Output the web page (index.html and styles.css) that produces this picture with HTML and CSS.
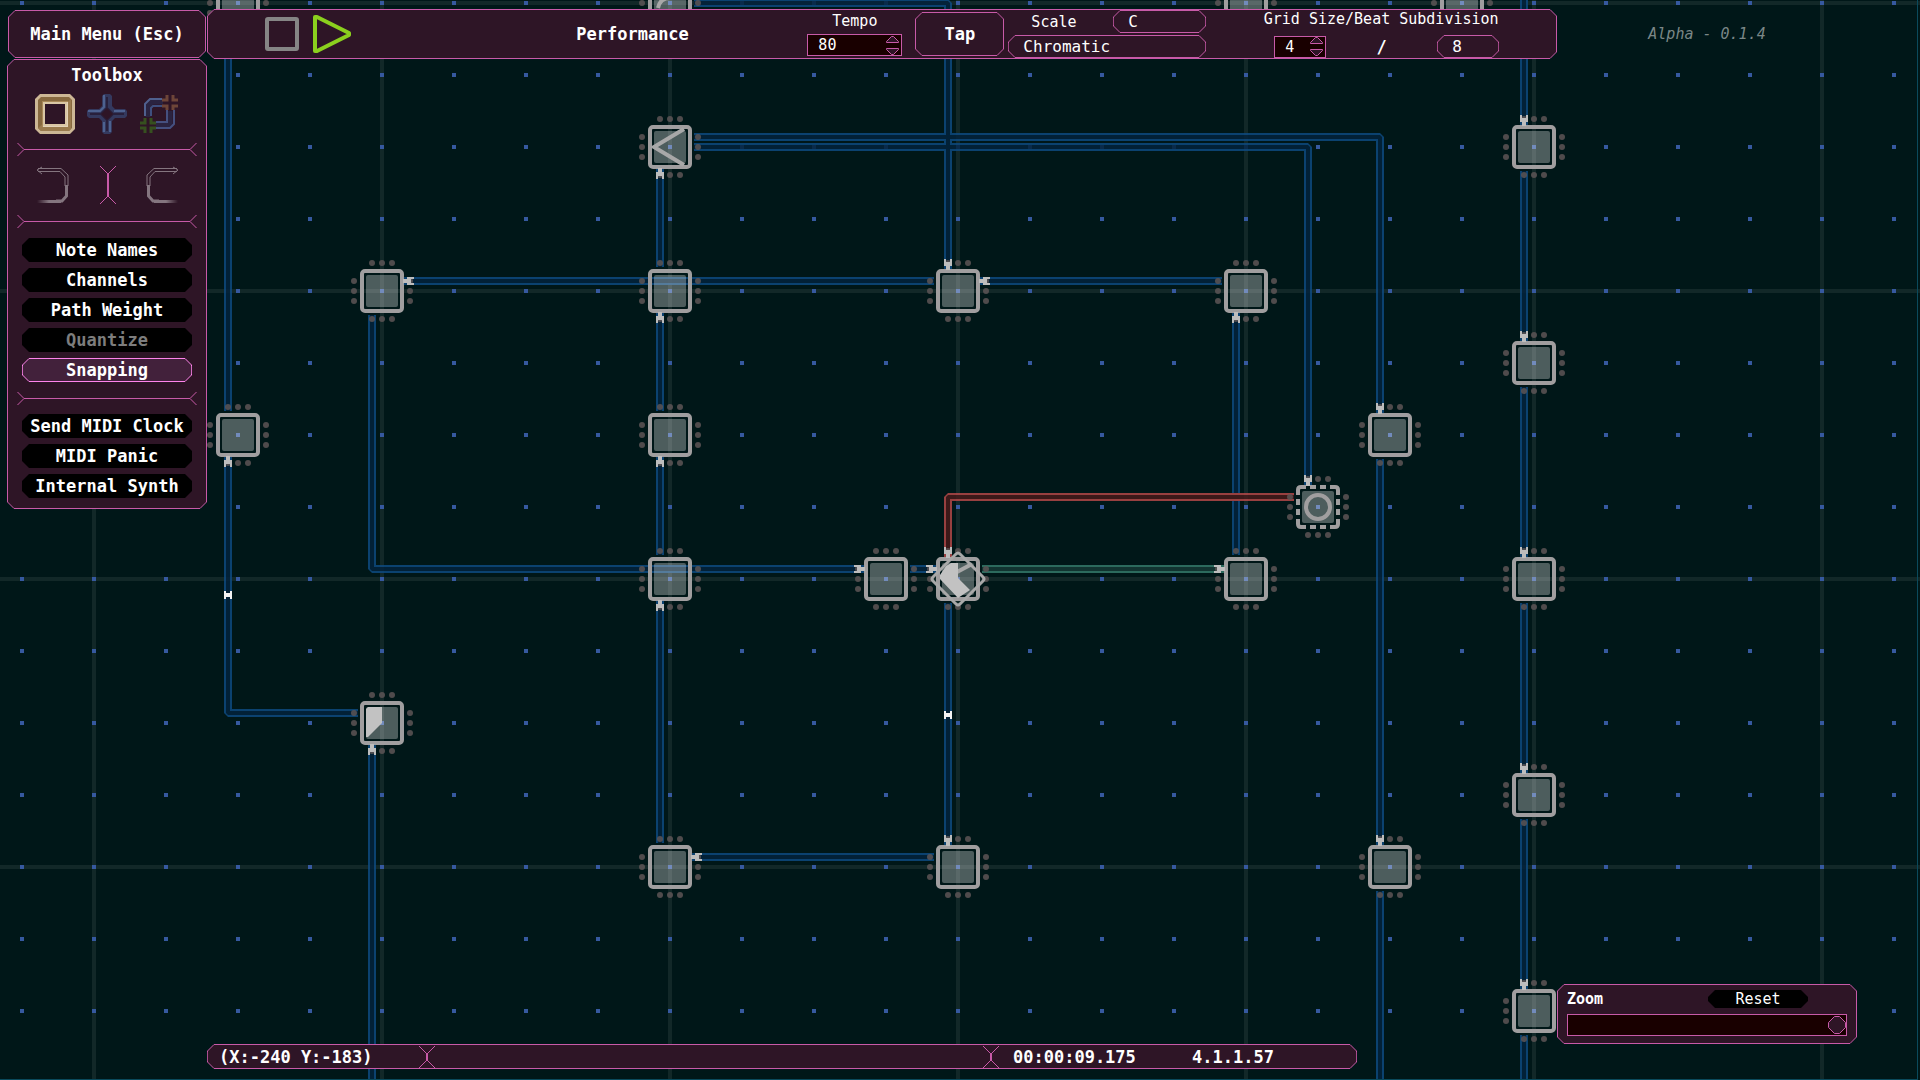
FILE: index.html
```
<!DOCTYPE html>
<html lang="en">
<head>
  <meta charset="UTF-8" />
  <meta name="viewport" content="width=device-width, initial-scale=1.0"/>
  <title>Performance</title>
  <link rel="stylesheet" href="styles.css">
</head>
<body>
  <!-- node canvas -->
  <svg class="board" aria-hidden="true">
    <defs>
      <pattern id="lines" x="92" y="1" width="288" height="288" patternUnits="userSpaceOnUse">
        <path class="grid-line" d="M0 0H288V4H4V288H0Z"/>
      </pattern>
      <pattern id="dots" x="20" y="1" width="72" height="72" patternUnits="userSpaceOnUse">
        <rect class="grid-dot" width="4" height="4"/>
      </pattern>
      <marker id="arrow" markerUnits="userSpaceOnUse" markerWidth="12" markerHeight="8" viewBox="-11 -4 12 8" refX="0" refY="0" orient="auto">
        <path class="arrow" d="M-10 -4H-3V-2H1V2H-3V4H-10V2H-7V-2H-10Z"/>
      </marker>
      <g id="pins">
        <circle cx="-28" cy="-10" r="3"/><circle cx="-28" cy="0" r="3"/><circle cx="-28" cy="10" r="3"/>
        <circle cx="28" cy="-10" r="3"/><circle cx="28" cy="0" r="3"/><circle cx="28" cy="10" r="3"/>
        <circle cx="-10" cy="-28" r="3"/><circle cx="0" cy="-28" r="3"/><circle cx="10" cy="-28" r="3"/>
        <circle cx="-10" cy="28" r="3"/><circle cx="0" cy="28" r="3"/><circle cx="10" cy="28" r="3"/>
      </g>
      <g id="core">
        <use href="#pins" class="pins"/>
        <rect class="core" x="-16" y="-16" width="32" height="32" rx="2"/>
      </g>
      <g id="node">
        <use href="#core"/>
        <rect class="frame" x="-20" y="-20" width="40" height="40" rx="3"/>
      </g>

      <path id="p1" d="M228 411V10"/>
      <path id="p2" d="M358 713H228V457"/>
      <path id="p3" d="M660 267V169"/>
      <path id="p4" d="M694 137H1380V413"/>
      <path id="p5" d="M694 147H1308V485"/>
      <path id="p6" d="M934 281H404"/>
      <path id="p7" d="M1222 281H980"/>
      <path id="p8" d="M372 315V569H864"/>
      <path id="p9" d="M694 3H948V269"/>
      <path id="p10" d="M660 411V313"/>
      <path id="p11" d="M660 555V457"/>
      <path id="p12" d="M660 843V601"/>
      <path id="p13" d="M910 569H936"/>
      <path id="p14" d="M1236 555V313"/>
      <path id="p15" d="M948 603V845"/>
      <path id="p16" d="M934 857H692"/>
      <path id="p17" d="M372 1080V745"/>
      <path id="p18" d="M1380 459V845"/>
      <path id="p19" d="M1380 891V1100"/>
      <path id="p20" d="M1524 -20V125"/>
      <path id="p21" d="M1524 171V341"/>
      <path id="p22" d="M1524 387V557"/>
      <path id="p23" d="M1524 603V773"/>
      <path id="p24" d="M1524 819V989"/>
      <path id="p25" d="M1524 1035V1100"/>
      <path id="red-path" d="M1294 497H948V557"/>
      <path id="green-path" d="M982 569H1224"/>
    </defs>

    <rect width="100%" height="100%" fill="url(#lines)"/>
    <rect width="100%" height="100%" fill="url(#dots)"/>

    <g class="wires">
      <g class="wire">
        <use href="#p1"/><use href="#p2"/><use href="#p3"/><use href="#p10"/><use href="#p11"/>
        <use href="#p12"/><use href="#p13"/><use href="#p14"/><use href="#p15"/><use href="#p16"/>
        <use href="#p17"/><use href="#p18"/><use href="#p19"/><use href="#p20"/><use href="#p21"/>
        <use href="#p22"/><use href="#p23"/><use href="#p24"/><use href="#p25"/><use href="#p9"/>
        <use href="#p6"/><use href="#p7"/><use href="#p8"/><use href="#p4"/><use href="#p5"/>
      </g>
      <g class="wire-core">
        <use href="#p1"/><use href="#p2"/><use href="#p3"/><use href="#p10"/><use href="#p11"/>
        <use href="#p12"/><use href="#p13"/><use href="#p14"/><use href="#p15"/><use href="#p16"/>
        <use href="#p17"/><use href="#p18"/><use href="#p19"/><use href="#p20"/><use href="#p21"/>
        <use href="#p22"/><use href="#p23"/><use href="#p24"/><use href="#p25"/><use href="#p9"/>
        <use href="#p6"/><use href="#p7"/><use href="#p8"/><use href="#p4"/><use href="#p5"/>
      </g>
      <use href="#red-path" class="wire red"/><use href="#red-path" class="wire-core red"/>
      <use href="#green-path" class="wire green"/><use href="#green-path" class="wire-core green"/>
    </g>

    <!-- nodes -->
    <g>
      <use href="#node" x="238" y="3"/><use href="#node" x="670" y="3"/>
      <use href="#node" x="1246" y="3"/><use href="#node" x="1462" y="3"/>
      <use href="#node" x="670" y="147"/>
      <use href="#node" x="382" y="291"/><use href="#node" x="670" y="291"/>
      <use href="#node" x="958" y="291"/><use href="#node" x="1246" y="291"/>
      <use href="#node" x="238" y="435"/><use href="#node" x="670" y="435"/><use href="#node" x="1390" y="435"/>
      <use href="#node" x="670" y="579"/><use href="#node" x="886" y="579"/><use href="#node" x="1246" y="579"/>
      <use href="#node" x="382" y="723"/>
      <use href="#node" x="670" y="867"/><use href="#node" x="958" y="867"/><use href="#node" x="1390" y="867"/>
      <use href="#node" x="1534" y="147"/><use href="#node" x="1534" y="363"/><use href="#node" x="1534" y="579"/>
      <use href="#node" x="1534" y="795"/><use href="#node" x="1534" y="1011"/>
    </g>
    <path class="mark" d="M684 129L654 147L684 165"/>
    <path class="mark" d="M658 8Q660 -2 670 -2"/>
    <path class="fill" d="M366 709L368 707H382V723L368 737H366Z"/>
    <g>
      <use href="#core" x="1318" y="507"/>
      <path class="frame" d="M1298 495V490Q1298 487 1301 487H1306M1310 487H1316M1320 487H1326M1330 487H1335Q1338 487 1338 490V495M1338 499V505M1338 509V515M1338 519V524Q1338 527 1335 527H1330M1326 527H1320M1316 527H1310M1306 527H1301Q1298 527 1298 524V519M1298 515V509M1298 505V499"/>
      <circle class="frame" cx="1318" cy="507" r="12"/>
    </g>
    <g>
      <use href="#node" x="958" y="579"/>
      <path class="mark" d="M957 572L972 564"/>
      <path class="fill" d="M946 566L951 563H958V578L970 590L958 598L940 579V575Z"/>
      <path class="diamond" d="M956 554Q958 552 960 554L983 577Q985 579 983 581L960 604Q958 606 956 604L933 581Q931 579 933 577Z"/>
    </g>

    <g class="heads">
      <use href="#p2"/><use href="#p3"/><use href="#p4"/><use href="#p5"/><use href="#p6"/>
      <use href="#p7"/><use href="#p8"/><use href="#p9"/><use href="#p10"/><use href="#p11"/>
      <use href="#p12"/><use href="#p13"/><use href="#p14"/><use href="#p15"/><use href="#p16"/>
      <use href="#p17"/><use href="#p18"/><use href="#p20"/><use href="#p21"/><use href="#p22"/>
      <use href="#p23"/><use href="#p24"/><use href="#red-path"/><use href="#green-path"/>
    </g>
    <!-- travelling signals -->
    <path class="signal" d="M224 591h2v2h4v-2h2v8h-2v-2h-4v2h-2zM944 711h2v2h4v-2h2v8h-2v-2h-4v2h-2z"/>
  </svg>
  <div class="board-edge"></div>

  <div class="hud">
    <button type="button" class="main-menu">Main Menu (Esc)</button>

    <header class="toolbar panel">
      <div class="transport">
        <button type="button" class="icon-btn" aria-label="Stop">
          <svg width="34" height="34"><rect x="2" y="2" width="30" height="30" rx="1" fill="none" stroke="#858585" stroke-width="4"/></svg>
        </button>
        <button type="button" class="icon-btn" aria-label="Play">
          <svg width="38" height="38"><path d="M2 2V36H4L36 20V18L4 2Z" fill="none" stroke="#8bd01e" stroke-width="4" stroke-linejoin="round"/></svg>
        </button>
      </div>
      <h1>Performance</h1>
      <div class="field tempo">
        <label for="tempo">Tempo</label>
        <div class="spin">
          <input type="text" id="tempo" value="80" inputmode="numeric">
          <div class="steps">
            <button type="button" aria-label="Tempo up"><svg width="13" height="8"><path d="M.5 6.500V5.500L5.500 .5H7.500L12.500 5.500V6.500Z"/></svg></button>
            <button type="button" aria-label="Tempo down"><svg width="13" height="8"><path d="M.5 1.500V2.500L5.500 7.500H7.500L12.500 2.500V1.500Z"/></svg></button>
          </div>
        </div>
      </div>
      <button type="button" class="tap">Tap</button>
      <div class="scale">
        <div class="scale-row">
          <label for="root">Scale</label>
          <select id="root"><option>C</option><option>D</option><option>E</option></select>
        </div>
        <select id="scale" aria-label="Scale type"><option>Chromatic</option><option>Major</option><option>Minor</option></select>
      </div>
      <div class="field">
        <label for="grid">Grid Size/Beat Subdivision</label>
        <div class="grid-row">
          <div class="spin small">
            <input type="text" id="grid" value="4" inputmode="numeric">
            <div class="steps">
              <button type="button" aria-label="Grid up"><svg width="13" height="8"><path d="M.5 6.500V5.500L5.500 .5H7.500L12.500 5.500V6.500Z"/></svg></button>
              <button type="button" aria-label="Grid down"><svg width="13" height="8"><path d="M.5 1.500V2.500L5.500 7.500H7.500L12.500 2.500V1.500Z"/></svg></button>
            </div>
          </div>
          <span class="slash">/</span>
          <select id="beat" aria-label="Beat subdivision"><option>8</option><option>4</option><option>16</option></select>
        </div>
      </div>
    </header>

    <p class="version">Alpha - 0.1.4</p>

    <aside class="toolbox panel">
      <h2>Toolbox</h2>
      <div class="tools">
        <button type="button" class="icon-btn" aria-label="Node tool">
          <svg width="40" height="40">
            <path d="M5 0H35L40 5V35L35 40H5L0 35V5Z" fill="#cdb795"/>
            <path d="M6 3H34L37 6V34L34 37H6L3 34V6Z" fill="#87693f"/>
            <path d="M36 5V35L34 37H6L3 34Z" fill="#9a7b4e"/>
            <path d="M7 7H33V33H7Z" fill="#a98958"/>
            <path d="M31 8H33V33H8V31H31Z" fill="#e2d2b8"/>
            <path d="M9 9H31V31H9Z" fill="#2e1526" stroke="#d9c6a5" stroke-width="2"/>
          </svg>
        </button>
        <button type="button" class="icon-btn" aria-label="Path tool">
          <svg width="40" height="40">
            <path d="M17 0H23L25 2V12L28 15H38L40 17V22L38 24H28L25 27V38L23 40H17L15 38V27L12 24H2L0 22V17L2 15H12L15 12V2Z" fill="#34395e"/>
            <path d="M17 1V13L13 17H1M23 27V38M27 17H38M17 28V38" fill="none" stroke="#4d6290" stroke-width="2"/>
            <path d="M20 3V14L14 20H3M37 20H26L20 26V37M20 14L26 20M14 20L20 26" fill="none" stroke="#28203c" stroke-width="2"/>
            <path d="M20 14L26 20L20 26L14 20Z" fill="#2e1526"/>
          </svg>
        </button>
        <button type="button" class="icon-btn" aria-label="Connect tool">
          <svg width="40" height="40" fill="none">
            <path d="M9 23V12L13 8H24M31 17V31H17" stroke="#2a2340" stroke-width="5"/>
            <path d="M6 22V10L11 5H23" stroke="#4f608e" stroke-width="2"/>
            <path d="M12 22V14L14 12H25" stroke="#3f4f7e" stroke-width="2"/>
            <path d="M28 16V28H17M35 16V30L31 34H17" stroke="#45507f" stroke-width="2"/>
            <path d="M23 6H28V1M34 1V6H39M23 12H28V16M34 16V12H39" stroke="#6d4538" stroke-width="3"/>
            <path d="M1 29H6V24M12 24V29H17M1 34H6V39M12 39V34H17" stroke="#36501f" stroke-width="3"/>
          </svg>
        </button>
      </div>
      <hr>
      <div class="tools history">
        <button type="button" class="icon-btn" aria-label="Undo">
          <svg width="33" height="38" fill="none">
            <defs><linearGradient id="fade"><stop offset="0" stop-color="#84757f" stop-opacity="0"/><stop offset="0.500" stop-color="#84757f"/></linearGradient></defs>
            <path id="undo-line" d="M6 1L1 4L6 8M2 2.500H25L32 9V20M2 5.500H24L29 11V20" stroke="#84757f"/>
            <path d="M30.500 19V30L26 35H20" stroke="#84757f" stroke-width="3"/>
            <rect x="1" y="34" width="24" height="3" fill="url(#fade)"/>
          </svg>
        </button>
        <svg class="fork" width="16" height="38"><path d="M0 0L8 8L16 0M0 38L8 30L16 38"/><path class="stem" d="M8 7V31"/></svg>
        <button type="button" class="icon-btn flip" aria-label="Redo">
          <svg width="33" height="38" fill="none">
            <use href="#undo-line"/>
            <path d="M30.500 19V30L26 35H20" stroke="#84757f" stroke-width="3"/>
            <rect x="1" y="34" width="24" height="3" fill="url(#fade)"/>
          </svg>
        </button>
      </div>
      <hr>
      <div class="options">
        <button type="button">Note Names</button>
        <button type="button">Channels</button>
        <button type="button">Path Weight</button>
        <button type="button" disabled>Quantize</button>
        <button type="button" class="active">Snapping</button>
      </div>
      <hr>
      <div class="options">
        <button type="button">Send MIDI Clock</button>
        <button type="button">MIDI Panic</button>
        <button type="button">Internal Synth</button>
      </div>
    </aside>

    <footer class="status panel">
      <span class="coords">(X:-240 Y:-183)</span>
      <svg class="fork" width="16" height="22"><path d="M0 0L8 8L16 0M0 22L8 14L16 22"/><path class="stem" d="M8 7V15"/></svg>
      <span class="message"></span>
      <svg class="fork" width="16" height="22"><path d="M0 0L8 8L16 0M0 22L8 14L16 22"/><path class="stem" d="M8 7V15"/></svg>
      <span class="clock">00:00:09.175</span>
      <span class="beats">4.1.1.57</span>
    </footer>

    <section class="zoom panel">
      <div class="zoom-row">
        <label for="zoom">Zoom</label>
        <button type="button" class="reset">Reset</button>
      </div>
      <input type="range" id="zoom" min="0" max="100" value="100">
    </section>
  </div>
</body>
</html>
```
FILE: styles.css
```
* { box-sizing: border-box; }

:root {
  --panel: #2e1526;
  --pink: #c85aa8;
  --field: #190000;
  --frame: #a09e9f;
}

body {
  margin: 0;
  height: 100vh;
  overflow: hidden;
  background: #001718;
  color: white;
  font-family: 'DejaVu Sans Mono', monospace;
  font-size: 17px;
  font-weight: bold;
}

h1, h2, p { margin: 0; font-size: 17px; }

button, input, select {
  font: inherit;
  color: inherit;
  margin: 0;
  padding: 0;
  background: none;
  border: none;
}

button { cursor: pointer; }
button:disabled { color: #7d7d7d; cursor: default; }

/* board */
.board, .board-edge {
  position: absolute;
  top: 0;
  left: 0;
  width: 100%;
  height: 100%;
}

.board-edge {
  width: calc(100% - 2px);
  border-right: 1px solid #0a4a5c;
  border-bottom: 1px solid #0a4a5c;
}

.grid-line { fill: #122828; }
.grid-dot { fill: #36599f; }
.wires { opacity: 0.85; }
.wire, .wire-core { fill: none; stroke-linejoin: bevel; }
.wire { stroke: #0e4a80; stroke-width: 8px; }
.wire-core { stroke: #03233d; stroke-width: 4px; }
.wire.red { stroke: #b34848; }
.wire-core.red { stroke: #471a1a; }
.wire.green { stroke: #34796a; }
.wire-core.green { stroke: #163a36; }
.arrow { fill: #bdbdbd; }
.heads { fill: none; marker-end: url(#arrow); }
.pins { fill: #5d5556; opacity: 0.85; }
.core { fill: #ffffff; opacity: 0.3; }
.frame { fill: none; stroke: var(--frame); stroke-width: 4px; }
.mark { fill: none; stroke: #a8a8a8; stroke-width: 4px; }
.diamond { fill: none; stroke: #a8a8a8; stroke-width: 3px; }
.fill { fill: #c2c2c2; }
.signal { fill: #f2f2f2; }

/* overlay */
.hud {
  position: relative;
  display: grid;
  grid-template-columns: 200px 1fr 300px;
  grid-template-rows: 50px auto 1fr auto;
  height: 100vh;
  padding: 9px 63px 11px 7px;
}

/* cut corners, 7px */
.panel, .main-menu, .tap, select {
  border: 1px solid transparent;
  border-image: url("data:image/svg+xml,%3Csvg xmlns='http://www.w3.org/2000/svg' width='30' height='30'%3E%3Cpath d='M7 .5H23L29.5 7V23L23 29.5H7L.5 23V7Z' fill='%232e1526' stroke='%23c85aa8'/%3E%3C/svg%3E") 8 fill / 8px;
}

.main-menu {
  height: 48px;
  margin: 1px 1px 0 1px;
}

.toolbar {
  display: grid;
  grid-template-columns: 5fr 7fr 95px 102px 202px 7fr;
  align-items: center;
  font-size: 15px;
  font-weight: normal;
}

.toolbar h1 { text-align: center; }

.transport {
  display: flex;
  align-items: center;
  gap: 14px;
  padding-left: 57px;
}

.icon-btn svg, .steps svg { display: block; }

.field {
  display: flex;
  flex-direction: column;
  align-items: center;
  align-self: stretch;
  justify-content: space-between;
  line-height: 18px;
}

.tempo { padding: 2px 0; }

.spin {
  display: flex;
  align-items: center;
  width: 100%;
  height: 22px;
  padding: 0 2px 0 10px;
  background: var(--field);
  border: 1px solid var(--pink);
}

.spin input { flex: 1; min-width: 0; }

.steps {
  display: flex;
  flex-direction: column;
  gap: 3px;
}

.steps path { fill: var(--panel); stroke: var(--pink); }

.tap {
  height: 44px;
  margin-left: 13px;
  font-size: 17px;
  font-weight: bold;
}

.scale {
  display: flex;
  flex-direction: column;
  gap: 2px;
  margin-left: 4px;
}

.scale-row {
  display: flex;
  justify-content: space-between;
  align-items: center;
  padding-left: 23px;
}

select {
  appearance: none;
  height: 23px;
  padding-left: 14px;
  font-size: 16px;
}

#root { width: 93px; }
#beat { width: 62px; }

option { background: var(--panel); }

.grid-row {
  display: flex;
  justify-content: space-between;
  align-items: center;
  width: 236px;
  padding-left: 11px;
}

.spin.small { width: 52px; }

.slash { font-size: 17px; font-weight: bold; }

.version {
  align-self: center;
  text-align: center;
  color: #7b8787;
  font-size: 15px;
  font-weight: normal;
  font-style: italic;
}

/* toolbox */
.toolbox {
  grid-column: 1;
  padding: 5px 9px 10px;
}

.toolbox h2 {
  line-height: 20px;
  text-align: center;
}

.tools {
  display: flex;
  justify-content: space-between;
  padding: 9px 18px;
}

.history { padding: 10px 18px 11px 19px; }
.flip { transform: scaleX(-1); }

.fork { display: block; fill: none; stroke: var(--pink); }
.fork .stem { stroke-width: 2px; }

hr {
  height: 13px;
  margin: 0;
  border: 0 solid transparent;
  border-image: url("data:image/svg+xml,%3Csvg xmlns='http://www.w3.org/2000/svg' width='30' height='13'%3E%3Cpath d='M.5 0L7 6.5L.5 13M29.5 0L23 6.5L29.5 13M7 6.5H23' fill='none' stroke='%23c85aa8'/%3E%3C/svg%3E") 0 8 fill / 0 8px;
  border-width: 0 1px;
}

.options {
  display: flex;
  flex-direction: column;
  gap: 6px;
  padding: 10px 5px;
}

.options:last-child { padding: 9px 5px 0; }

.options button, .reset {
  height: 24px;
  background: #000000;
  clip-path: polygon(7px 0, calc(100% - 7px) 0, 100% 7px, 100% calc(100% - 7px), calc(100% - 7px) 100%, 7px 100%, 0 calc(100% - 7px), 0 7px);
}

.options .active {
  background: none;
  clip-path: none;
  border: 1px solid transparent;
  border-image: url("data:image/svg+xml,%3Csvg xmlns='http://www.w3.org/2000/svg' width='30' height='30'%3E%3Cpath d='M7 .5H23L29.5 7V23L23 29.5H7L.5 23V7Z' fill='%2342213b' stroke='%23ff84ec'/%3E%3C/svg%3E") 8 fill / 8px;
}

/* bottom */
.status {
  grid-column: 2;
  grid-row: 4;
  align-self: end;
  display: flex;
  align-items: center;
  height: 25px;
  margin-right: 200px;
  padding-left: 11px;
}

.coords { width: 200px; }
.message { flex: 1; }
.clock { width: 179px; padding-left: 14px; }
.beats { width: 178px; padding-left: 14px; }

.zoom {
  grid-column: 3;
  grid-row: 4;
  margin-bottom: 25px;
  padding: 5px 9px 7px;
  font-size: 15px;
}

.zoom-row {
  display: flex;
  justify-content: space-between;
  line-height: 18px;
  padding-right: 39px;
  margin-bottom: 6px;
}

.reset {
  width: 100px;
  height: 18px;
  font-weight: normal;
}

input[type="range"] {
  appearance: none;
  display: block;
  width: 100%;
  height: 22px;
  background: var(--field);
  border: 1px solid var(--pink);
}

input[type="range"]::-webkit-slider-thumb {
  appearance: none;
  width: 18px;
  height: 18px;
  border: 1px solid transparent;
  border-image: url("data:image/svg+xml,%3Csvg xmlns='http://www.w3.org/2000/svg' width='18' height='18'%3E%3Cpath d='M6.500 .5H11.500L17.500 6.500V11.500L11.500 17.500H6.500L.5 11.500V6.500Z' fill='%232e1526' stroke='%23c85aa8'/%3E%3C/svg%3E") 8 fill / 8px;
}
```
